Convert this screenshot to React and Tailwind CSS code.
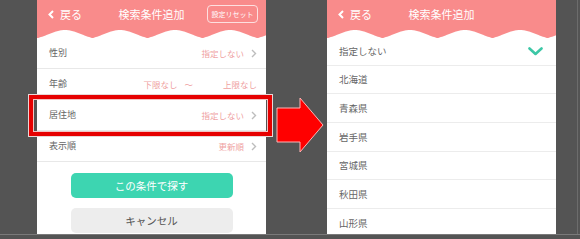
import React from "react";

const PINK = "#f98b8b";

function wavePath() {
  const w = 229;
  const h = 8;
  let d = `M0,0`;
  for (let x = 0; x <= w; x += 1) {
    const t = (x - 28) / 55;
    const s = (1 - Math.cos(2 * Math.PI * t)) / 2;
    const p = 1 - Math.abs(Math.cos(Math.PI * t));
    const y = h * (0.5 * s + 0.5 * p);
    d += ` L${x},${y.toFixed(2)}`;
  }
  d += ` L${w},0 Z`;
  return d;
}

const WAVE = wavePath();

function Header({ reset }) {
  return (
    <div>
      <div className="h-[30px] bg-[#f98b8b] grid grid-cols-[1fr_auto_1fr] items-center px-[11px] pb-[2px] text-white">
        <div className="flex items-center gap-[6px]">
          <svg width="6" height="9" viewBox="0 0 6 9">
            <polyline points="5,1 1.5,4.5 5,8" fill="none" stroke="white" strokeWidth="2" />
          </svg>
          <span className="text-[11px] leading-none">戻る</span>
        </div>
        <div className="text-[11px] leading-none">検索条件追加</div>
        <div className="flex justify-end">
          {reset && (
            <div className="w-[51px] h-[18px] -mr-[3px] border border-[#fde0e0] rounded-[4px] flex items-center justify-center text-[7px] leading-none">
              設定リセット
            </div>
          )}
        </div>
      </div>
      <svg width="229" height="8" viewBox="0 0 229 8" className="block">
        <path d={WAVE} fill={PINK} />
      </svg>
    </div>
  );
}

function Chev() {
  return (
    <svg width="6" height="9" viewBox="0 0 6 9" className="ml-[7px]">
      <polyline points="1,1 4.5,4.5 1,8" fill="none" stroke="#bdbdbd" strokeWidth="1.4" />
    </svg>
  );
}

function Row({ label, children }) {
  return (
    <div className="h-[31px] border-b border-[#e8e8e8] flex items-center pl-[12px] pr-[9px]">
      <span className="text-[9px] text-[#666]">{label}</span>
      <div className="ml-auto flex items-center text-[8.5px] text-[#ef9f9f]">{children}</div>
    </div>
  );
}

function LeftPanel() {
  return (
    <div className="w-[229px] h-full bg-white flex flex-col">
      <Header reset />
      <Row label="性別">
        <span>指定しない</span>
        <Chev />
      </Row>
      <Row label="年齢">
        <span>下限なし</span>
        <span className="ml-[7px]">〜</span>
        <span className="ml-[30px]">上限なし</span>
      </Row>
      <Row label="居住地">
        <span>指定しない</span>
        <Chev />
      </Row>
      <Row label="表示順">
        <span>更新順</span>
        <Chev />
      </Row>
      <div className="flex flex-col items-center pt-[11px] gap-[10px]">
        <div className="w-[162px] h-[25px] rounded-[5px] bg-[#3dd5b1] text-white text-[10.5px] flex items-center justify-center">
          この条件で探す
        </div>
        <div className="w-[162px] h-[25px] rounded-[5px] bg-[#ededed] text-[#555] text-[10.5px] flex items-center justify-center">
          キャンセル
        </div>
      </div>
    </div>
  );
}

const PREFS = ["北海道", "青森県", "岩手県", "宮城県", "秋田県", "山形県"];

function RightPanel() {
  return (
    <div className="w-[229px] h-full bg-white flex flex-col overflow-hidden">
      <Header />
      <div className="h-[27.7px] shrink-0 border-b border-[#ececec] flex items-center pl-[12px] pr-[13px]">
        <span className="text-[9.5px] text-[#666]">指定しない</span>
        <svg width="15" height="9" viewBox="0 0 15 9" className="ml-auto">
          <polyline points="1.5,1.5 7.5,7 13.5,1.5" fill="none" stroke="#3cc7a6" strokeWidth="2.6" strokeLinecap="round" strokeLinejoin="round" />
        </svg>
      </div>
      {PREFS.map((p) => (
        <div key={p} className="h-[28.7px] shrink-0 border-b border-[#ececec] flex items-center pl-[12px]">
          <span className="text-[9.5px] text-[#666]">{p}</span>
        </div>
      ))}
    </div>
  );
}

export default function App() {
  return (
    <div className="relative w-[580px] h-[239px] bg-[#545454] overflow-hidden font-['Noto_Sans_CJK_JP','Noto_Sans',sans-serif]">
      <div className="flex h-[235px] border-b border-[#7a7a7a]">
        <div className="w-[37px] shrink-0" />
        <LeftPanel />
        <div className="w-[61px] shrink-0" />
        <RightPanel />
        <div className="flex-1 mr-[2px] border-r border-[#6c6c6c]" />
      </div>

      {/* highlight box */}
      <div className="absolute left-[28px] top-[94px] w-[245px] h-[43px] border border-[#e9d6d6]">
        <div className="w-full h-full border-[4px] border-[#e60000]">
          <div className="w-full h-full border border-[#f3c2c2]" />
        </div>
      </div>

      {/* arrow */}
      <svg className="absolute left-[274px] top-[94px]" width="52" height="62" viewBox="0 0 52 62">
        <polygon points="3,14 26,14 26,4 49,31 26,58 26,48 3,48" fill="#ff0000" stroke="#ffb4b4" strokeWidth="1" />
      </svg>
    </div>
  );
}
